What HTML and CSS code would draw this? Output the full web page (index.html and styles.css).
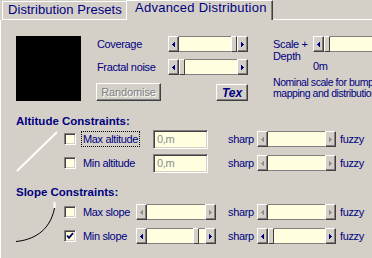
FILE: index.html
```html
<!DOCTYPE html>
<html>
<head>
<meta charset="utf-8">
<link rel="stylesheet" href="styles.css">
</head>
<body>
<div class="tabs">
  <div class="tab">Distribution Presets</div>
  <div class="tab active">Advanced Distribution</div>
  <div class="tab-fill"></div>
</div>
<div class="panel">
  <div class="top">
    <div class="preview"></div>
    <div class="controls">
      <div class="crow">
        <span class="lbl">Coverage</span>
        <div class="sb"><span class="arr l"></span><span class="track"><span class="thumb" style="margin-left:52px"></span></span><span class="arr r"></span></div>
      </div>
      <div class="crow">
        <span class="lbl">Fractal noise</span>
        <div class="sb"><span class="arr l"></span><span class="track"><span class="thumb" style="margin-left:0px"></span></span><span class="arr r"></span></div>
      </div>
      <div class="brow">
        <button class="btn rand">Randomise</button>
        <button class="btn tex">Tex</button>
      </div>
    </div>
    <div class="scale">
      <div class="srow">
        <span class="slbl">Scale +</span>
        <div class="sb"><span class="arr l"></span><span class="track"><span class="thumb" style="margin-left:0px"></span></span><span class="arr r"></span></div>
      </div>
      <div class="depth">Depth</div>
      <div class="zero">0m</div>
      <div class="note">Nominal scale for bump<br>mapping and distribution</div>
    </div>
  </div>

  <section class="sec alt">
    <div class="sec-title">Altitude Constraints:</div>
    <div class="sec-body">
      <div class="graphic">
        <svg width="48" height="44" viewBox="0 0 48 44"><line x1="1" y1="43" x2="41" y2="4" stroke="#fff" stroke-width="2"/></svg>
      </div>
      <div class="rows">
        <div class="row">
          <div class="lpart">
            <span class="cb"></span>
            <span class="clbl wa focus"><span>Max altitude</span></span>
            <span class="edit">0,m</span>
          </div>
          <div class="rpart">
            <span class="sharp">sharp</span>
            <div class="sb off r"><span class="arr l"></span><span class="track"></span><span class="arr r"></span></div>
            <span class="fuzzy">fuzzy</span>
          </div>
        </div>
        <div class="row">
          <div class="lpart">
            <span class="cb"></span>
            <span class="clbl wa"><span>Min altitude</span></span>
            <span class="edit">0,m</span>
          </div>
          <div class="rpart">
            <span class="sharp">sharp</span>
            <div class="sb off r"><span class="arr l"></span><span class="track"></span><span class="arr r"></span></div>
            <span class="fuzzy">fuzzy</span>
          </div>
        </div>
      </div>
    </div>
  </section>

  <section class="sec slope">
    <div class="sec-title">Slope Constraints:</div>
    <div class="sec-body">
      <div class="graphic">
        <svg width="48" height="44" viewBox="0 0 48 44"><path d="M0 42.5C16 41 34 33 38.5 9" fill="none" stroke="#000" stroke-width="1"/><rect x="37.5" y="3" width="2" height="6" fill="#fff"/></svg>
      </div>
      <div class="rows">
        <div class="row">
          <div class="lpart">
            <span class="cb"></span>
            <span class="clbl ws"><span>Max slope</span></span>
            <div class="sb off"><span class="arr l"></span><span class="track"></span><span class="arr r"></span></div>
          </div>
          <div class="rpart">
            <span class="sharp">sharp</span>
            <div class="sb off r"><span class="arr l"></span><span class="track"></span><span class="arr r"></span></div>
            <span class="fuzzy">fuzzy</span>
          </div>
        </div>
        <div class="row">
          <div class="lpart">
            <span class="cb"><svg width="8" height="8" viewBox="0 0 8 8"><path d="M1 3.5L3 5.8L7 1.2" fill="none" stroke="#000060" stroke-width="1.8"/></svg></span>
            <span class="clbl ws"><span>Min slope</span></span>
            <div class="sb"><span class="arr l"></span><span class="track"><span class="thumb" style="margin-left:46px"></span></span><span class="arr r"></span></div>
          </div>
          <div class="rpart">
            <span class="sharp">sharp</span>
            <div class="sb r"><span class="arr l"></span><span class="track"><span class="thumb" style="margin-left:0px"></span></span><span class="arr r"></span></div>
            <span class="fuzzy">fuzzy</span>
          </div>
        </div>
      </div>
    </div>
  </section>
</div>
</body>
</html>
```

FILE: styles.css
```css
* { box-sizing: border-box; margin: 0; padding: 0; }
html, body { width: 372px; height: 258px; overflow: hidden; }
body {
  background: #d4d0c8;
  font-family: "Liberation Sans", Arial, sans-serif;
  font-size: 11px;
  color: #000080;
  letter-spacing: -0.35px;
}

/* tabs */
.tabs { display: flex; align-items: flex-end; height: 20px; }
.tab {
  height: 19px;
  margin-left: 2px;
  width: 124px;
  flex: none;
  padding-left: 5px;
  border-top: 1px solid #fff;
  border-left: 1px solid #fff;
  border-bottom: 1px solid #fff;
  font-size: 13px;
  line-height: 15px;
  letter-spacing: 0.05px;
  white-space: nowrap;
}
.tab.active {
  height: 20px;
  margin-left: 0;
  width: 147px;
  padding-left: 8px;
  border-bottom: none;
  border-right: 1px solid #404040;
  box-shadow: inset -1px 0 #808080;
  line-height: 13px;
  letter-spacing: 0.25px;
}
.tab-fill { flex: 1; height: 20px; border-bottom: 1px solid #fff; }

.panel { border-left: 1px solid #fff; padding: 16px 0 0 15px; height: 238px; }

/* top block */
.top { display: flex; height: 65px; }
.preview { width: 65px; height: 65px; background: #000; flex: none; }
.controls { margin-left: 15px; width: 152px; flex: none; display: flex; flex-direction: column; }
.crow { display: flex; height: 16px; align-items: center; }
.crow + .crow { margin-top: 7px; }
.lbl { width: 72px; flex: none; padding-left: 1px; line-height: 16px; white-space: nowrap; }
.brow { margin-top: 8px; display: flex; justify-content: space-between; align-items: flex-start; }

.btn {
  font-family: inherit;
  background: #d4d0c8;
  border: 1px solid;
  border-color: #fff #404040 #404040 #fff;
  box-shadow: inset -1px -1px #808080;
  display: flex;
  align-items: center;
  justify-content: center;
  padding: 0;
}
.rand { width: 65px; height: 18px; color: #808080; text-shadow: 1px 1px #fff; font-size: 11px; letter-spacing: -0.1px; }
.tex { width: 32px; height: 17px; margin-top: 1px; font-weight: bold; font-style: italic; font-size: 12px; color: #000080; letter-spacing: 0; }

.scale { margin-left: 25px; flex: 1; min-width: 0; }
.srow { display: flex; height: 16px; }
.slbl { width: 40px; flex: none; line-height: 16px; white-space: nowrap; }
.depth { line-height: 9px; }
.zero { line-height: 11px; padding-left: 40px; }
.note { margin-top: 5px; line-height: 11px; white-space: nowrap; font-size: 10.5px; letter-spacing: -0.45px; }

/* scrollbars */
.sb { display: flex; height: 16px; width: 80px; flex: none; color: #000080; }
.sb.r { width: 79px; }
.sb.off { color: #909090; }
.arr {
  width: 11px;
  height: 100%;
  flex: none;
  background: #d4d0c8;
  border: 1px solid;
  border-color: #fff #404040 #404040 #fff;
  box-shadow: inset -1px -1px #808080;
  display: flex;
  align-items: center;
  justify-content: center;
}
.arr::after { content: ""; width: 1px; height: 1px; background: currentColor; }
.arr.l::after {
  margin-left: -2px;
  box-shadow: 1px -1px, 1px 0, 1px 1px, 2px -2px, 2px -1px, 2px 0, 2px 1px, 2px 2px;
}
.arr.r::after {
  margin-left: 2px;
  box-shadow: -1px -1px, -1px 0, -1px 1px, -2px -2px, -2px -1px, -2px 0, -2px 1px, -2px 2px;
}
.track {
  flex: 1;
  display: flex;
  background: #ffffe0;
  box-shadow: inset 0 1px #808080, inset 0 -1px #808080;
}
.thumb {
  width: 6px;
  flex: none;
  background: #d4d0c8;
  border: 1px solid;
  border-color: #fff #404040 #404040 #fff;
}

/* constraint sections */
.sec-title { font-weight: bold; font-size: 11.5px; line-height: 14px; letter-spacing: 0; white-space: nowrap; }
.alt { margin-top: 13px; }
.slope { margin-top: 12px; }
.sec-body { display: flex; }
.graphic { width: 48px; flex: none; }
.graphic svg { display: block; }
.rows { display: flex; flex-direction: column; gap: 4px; margin-top: 1px; }
.slope .rows { margin-top: 3px; }
.row { display: flex; align-items: center; height: 20px; }
.lpart { width: 164px; flex: none; display: flex; align-items: center; }
.rpart { display: flex; align-items: center; }

.cb {
  width: 12px;
  height: 12px;
  flex: none;
  border: 1px solid;
  border-color: #808080 #fff #fff #808080;
  box-shadow: inset 1px 1px #404040, inset -1px -1px #d4d0c8;
  background: #ffffe0;
  display: flex;
  align-items: center;
  justify-content: center;
}
.cb svg { display: block; }
.clbl { margin-left: 5px; flex: none; white-space: nowrap; }
.clbl.wa { width: 72px; }
.clbl.ws { width: 55px; }
.clbl span { display: inline-block; border: 1px dotted transparent; padding: 0 1px; line-height: 14px; }
.clbl.focus span { border-color: #000; }

.edit {
  width: 55px;
  height: 19px;
  flex: none;
  border: 1px solid;
  border-color: #808080 #fff #fff #808080;
  box-shadow: inset 1px 1px #404040, inset -1px -1px #d4d0c8;
  background: #ffffe0;
  color: #8c8c8c;
  padding-left: 3px;
  line-height: 17px;
}

.sharp { width: 29px; flex: none; }
.fuzzy { margin-left: 4px; }
```
